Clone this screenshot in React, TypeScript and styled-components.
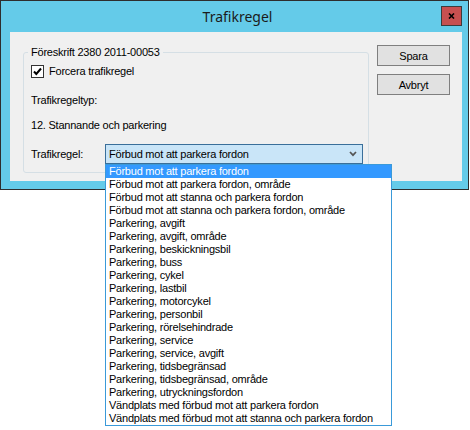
import React from "react";
import styled, { createGlobalStyle } from "styled-components";

const GlobalStyle = createGlobalStyle`
  html, body { margin: 0; padding: 0; background: #ffffff; }
  body {
    font-family: "Liberation Sans", Arial, sans-serif;
    font-size: 11px;
    letter-spacing: -0.22px;
    color: #000;
  }
`;

const Page = styled.div`
  width: 470px;
  min-height: 430px;
  background: #ffffff;
`;

const Window = styled.div`
  position: relative;
  box-sizing: border-box;
  width: 469px;
  border: 1px solid #2e2e2e;
  background: #64cbe9;
  padding: 0 6px 8px 9px;
  display: flex;
  flex-direction: column;
`;

const TitleBar = styled.div`
  height: 31px;
  display: grid;
  grid-template-columns: 1fr auto 1fr;
  align-items: center;
`;

const Title = styled.div`
  grid-column: 2;
  font-family: "Noto Sans", "Open Sans", sans-serif;
  font-size: 14px;
  letter-spacing: 0;
  color: #1b1b1b;
  margin-right: -3px;
`;

const CloseButton = styled.div`
  grid-column: 3;
  justify-self: end;
  align-self: start;
  margin-top: 5px;
  box-sizing: border-box;
  width: 21px;
  height: 20px;
  background: #c75050;
  border: 1px solid #3c3c3c;
  display: flex;
  align-items: center;
  justify-content: center;
`;

const Client = styled.div`
  background: #f0f0f0;
  display: flex;
  align-items: flex-start;
  gap: 8px;
  padding: 13px 0 8px 13px;
`;

const GroupBox = styled.div`
  box-sizing: border-box;
  width: 346px;
  margin-top: 7px;
  border: 1px solid #d5dfe5;
  border-radius: 3px;
  padding: 0 0 8px 7px;
  display: flex;
  flex-direction: column;
`;

const Legend = styled.div`
  align-self: flex-start;
  margin: -7px 0 0 -3px;
  padding: 0 3px;
  background: #f0f0f0;
  line-height: 13px;
  white-space: nowrap;
`;

const Row = styled.div<{ $top: number }>`
  display: flex;
  align-items: center;
  margin-top: ${(p) => p.$top}px;
  line-height: 13px;
  white-space: nowrap;
`;

const CheckBox = styled.div`
  box-sizing: border-box;
  width: 13px;
  height: 13px;
  border: 1px solid #333;
  background: #fff;
  display: flex;
  align-items: center;
  justify-content: center;
  margin-right: 5px;
`;

const FieldLabel = styled.div`
  width: 74px;
  flex: none;
`;

const ComboWrap = styled.div`
  position: relative;
  width: 258px;
  height: 20px;
`;

const Combo = styled.div`
  box-sizing: border-box;
  width: 100%;
  height: 100%;
  background: #c9e5f8;
  border: 1px solid #3a6f9a;
  display: flex;
  align-items: center;
  justify-content: space-between;
  padding: 0 5px 0 3px;
`;

const DropList = styled.div`
  position: absolute;
  top: 100%;
  left: 0;
  z-index: 10;
  box-sizing: border-box;
  width: 287px;
  background: #fff;
  border: 1px solid #3a9ad9;
  display: flex;
  flex-direction: column;
`;

const Item = styled.div<{ $selected?: boolean }>`
  height: 13px;
  line-height: 13px;
  padding-left: 3px;
  white-space: nowrap;
  background: ${(p) => (p.$selected ? "#3399ff" : "transparent")};
  color: ${(p) => (p.$selected ? "#ffffff" : "#000000")};
`;

const ButtonColumn = styled.div`
  display: flex;
  flex-direction: column;
  gap: 8px;
`;

const Button = styled.div`
  box-sizing: border-box;
  width: 73px;
  height: 21px;
  background: #e1e1e1;
  border: 1px solid #7f7f7f;
  display: flex;
  align-items: center;
  justify-content: center;
`;

const items = [
  "Förbud mot att parkera fordon",
  "Förbud mot att parkera fordon, område",
  "Förbud mot att stanna och parkera fordon",
  "Förbud mot att stanna och parkera fordon, område",
  "Parkering, avgift",
  "Parkering, avgift, område",
  "Parkering, beskickningsbil",
  "Parkering, buss",
  "Parkering, cykel",
  "Parkering, lastbil",
  "Parkering, motorcykel",
  "Parkering, personbil",
  "Parkering, rörelsehindrade",
  "Parkering, service",
  "Parkering, service, avgift",
  "Parkering, tidsbegränsad",
  "Parkering, tidsbegränsad, område",
  "Parkering, utryckningsfordon",
  "Vändplats med förbud mot att parkera fordon",
  "Vändplats med förbud mot att stanna och parkera fordon",
];

export default function App() {
  return (
    <Page>
      <GlobalStyle />
      <Window>
        <TitleBar>
          <Title>Trafikregel</Title>
          <CloseButton>
            <svg width="7" height="6" viewBox="0 0 7 6">
              <path d="M1 0.5 L6 5.5 M6 0.5 L1 5.5" stroke="#000" strokeWidth="1.6" fill="none" />
            </svg>
          </CloseButton>
        </TitleBar>
        <Client>
          <GroupBox>
            <Legend>Föreskrift 2380 2011-00053</Legend>
            <Row $top={6}>
              <CheckBox>
                <svg width="11" height="11" viewBox="0 0 11 11">
                  <path d="M2 5.5 L4.3 8 L9 2.5" stroke="#000" strokeWidth="2" fill="none" />
                </svg>
              </CheckBox>
              Forcera trafikregel
            </Row>
            <Row $top={16}>Trafikregeltyp:</Row>
            <Row $top={12}>12. Stannande och parkering</Row>
            <Row $top={12}>
              <FieldLabel>Trafikregel:</FieldLabel>
              <ComboWrap>
                <Combo>
                  <span>Förbud mot att parkera fordon</span>
                  <svg width="8" height="6" viewBox="0 0 8 6">
                    <path d="M1 1 L4 4.2 L7 1" stroke="#555" strokeWidth="1.7" fill="none" />
                  </svg>
                </Combo>
                <DropList>
                  {items.map((t, i) => (
                    <Item key={t} $selected={i === 0}>
                      {t}
                    </Item>
                  ))}
                </DropList>
              </ComboWrap>
            </Row>
          </GroupBox>
          <ButtonColumn>
            <Button>Spara</Button>
            <Button>Avbryt</Button>
          </ButtonColumn>
        </Client>
      </Window>
    </Page>
  );
}
